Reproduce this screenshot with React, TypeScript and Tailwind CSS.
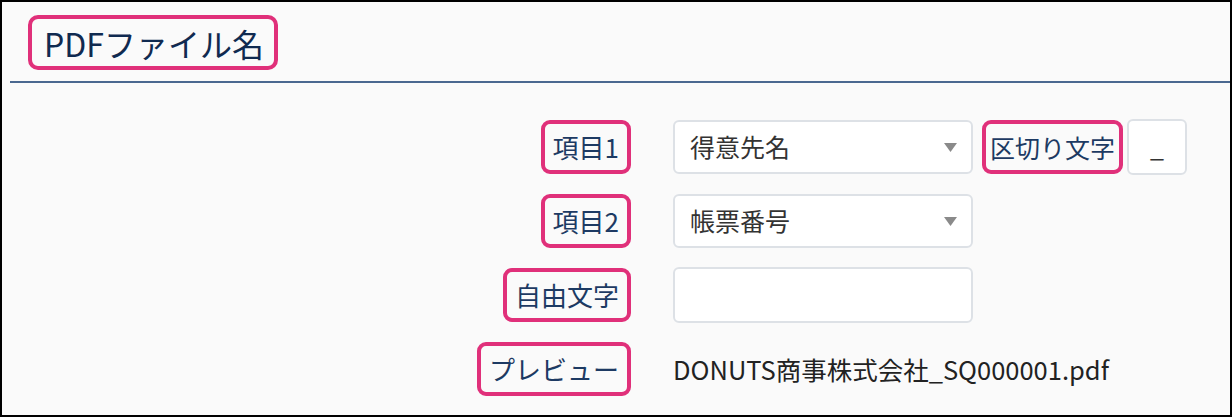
import React from "react";

const font = { fontFamily: '"Noto Sans CJK JP", "Noto Sans", sans-serif' };

function Label({ children, tight }: { children: React.ReactNode; tight?: boolean }) {
  return (
    <div
      className={
        tight
          ? "flex h-[54px] items-center rounded-[9px] border-4 border-[#e0307a] px-[4px] text-[25px] leading-none text-[#1d3a63]"
          : "flex h-[54px] items-center rounded-[9px] border-4 border-[#e0307a] px-[8px] text-[26px] leading-none text-[#1d3a63]"
      }
    >
      {children}
    </div>
  );
}

function Arrow() {
  return (
    <svg width="13" height="9" viewBox="0 0 13 9" className="shrink-0">
      <path d="M0 0 L13 0 L6.5 9 Z" fill="#8a8a8a" />
    </svg>
  );
}

function Select({ value }: { value: string }) {
  return (
    <div className="flex h-[54px] w-[300px] items-center justify-between rounded-[6px] border-2 border-[#dde1e6] bg-white pl-[15px] pr-[14px] text-[25px] text-[#333]">
      <span>{value}</span>
      <Arrow />
    </div>
  );
}

export default function App() {
  return (
    <div
      className="box-border flex h-[417px] w-[1232px] flex-col border-2 border-black bg-[#fafafa]"
      style={font}
    >
      <div className="pl-[26px] pt-[13px]">
        <div className="inline-flex h-[55px] items-center rounded-[10px] border-4 border-[#e0307a] pl-[12px] pr-[10px] text-[32px] leading-none text-[#102a50]">
          PDFファイル名
        </div>
      </div>
      <div className="ml-[8px] mt-[11px] h-[2px] bg-[#4a6890]" />
      <div className="mt-[36px] grid grid-cols-[629px_1fr] items-center gap-x-[42px] gap-y-[19px]">
        <div className="flex justify-end">
          <Label>項目1</Label>
        </div>
        <div className="flex items-center">
          <Select value="得意先名" />
          <div className="ml-[9px]">
            <Label tight>区切り文字</Label>
          </div>
          <div className="ml-[4px] flex h-[56px] w-[60px] items-center justify-center rounded-[6px] border-2 border-[#dde1e6] bg-white text-[25px] text-[#333]">
            _
          </div>
        </div>

        <div className="flex justify-end">
          <Label>項目2</Label>
        </div>
        <div className="flex items-center">
          <Select value="帳票番号" />
        </div>

        <div className="flex justify-end">
          <Label>自由文字</Label>
        </div>
        <div className="flex items-center">
          <div className="h-[56px] w-[300px] rounded-[6px] border-2 border-[#dde1e6] bg-white" />
        </div>

        <div className="flex justify-end">
          <Label>プレビュー</Label>
        </div>
        <div className="flex items-center text-[25.5px] text-[#222]">
          DONUTS商事株式会社_SQ000001.pdf
        </div>
      </div>
    </div>
  );
}
